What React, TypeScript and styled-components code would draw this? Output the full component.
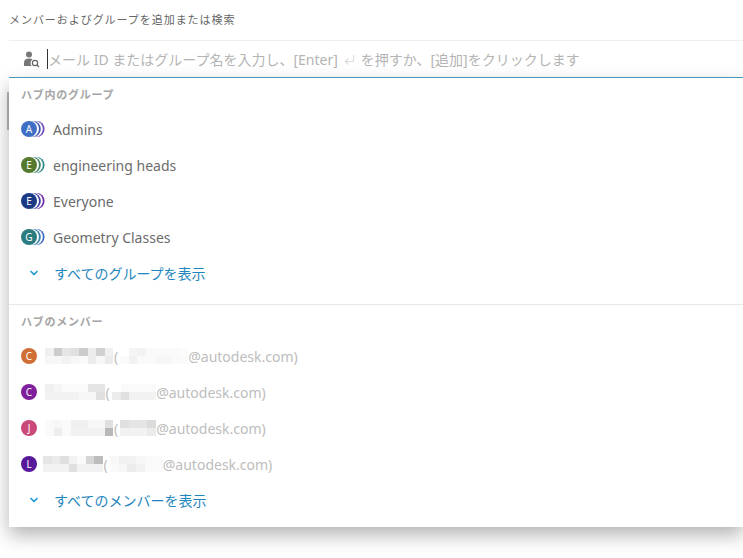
import React from 'react';
import styled, { createGlobalStyle } from 'styled-components';
import { ChevronDown } from 'lucide-react';

const GlobalStyle = createGlobalStyle`
  html, body {
    margin: 0;
    height: 100%;
    background: #fff;
    overflow: hidden;
  }
  body {
    font-family: "Noto Sans", "Noto Sans CJK JP", sans-serif;
  }
`;

const Page = styled.div`
  position: relative;
  width: 743px;
  height: 558px;
  padding: 12px 0 0 9px;
  box-sizing: border-box;
`;

// edge of a button on the page behind the open dropdown
const BehindEdge = styled.div`
  position: absolute;
  left: 7px;
  top: 92px;
  width: 2px;
  height: 38px;
  background: #b9b9b9;
`;

const FieldLabel = styled.div`
  height: 16px;
  line-height: 16px;
  font-size: 11px;
  letter-spacing: 0.95px;
  color: #666;
  margin-bottom: 12px;
`;

const SearchBar = styled.div`
  height: 38px;
  box-sizing: border-box;
  display: flex;
  align-items: center;
  padding-left: 14px;
  border-top: 1px solid #eeeeee;
  border-bottom: 1px solid #4f9fc6;
`;

const SearchIcon = styled.svg`
  width: 18px;
  height: 18px;
  flex: none;
  margin-right: 6px;
`;

const Caret = styled.span`
  width: 1px;
  height: 20px;
  background: #333;
  flex: none;
`;

const Placeholder = styled.span`
  font-size: 14px;
  color: #b4b4b4;
  white-space: nowrap;
`;

const EnterGlyph = styled.svg`
  width: 13px;
  height: 12px;
  margin: 0 5px 0 5px;
  vertical-align: -1px;
`;

const Dropdown = styled.div`
  position: relative;
  height: 449px;
  box-sizing: border-box;
  background: #fff;
  box-shadow: 0 8px 18px rgba(0, 0, 0, 0.3);
`;

const Section = styled.section<{ $last?: boolean }>`
  padding-top: 8px;
  padding-bottom: ${(p) => (p.$last ? '0' : '13px')};
  border-bottom: ${(p) => (p.$last ? 'none' : '1px solid #e8e8e8')};
`;

const SectionTitle = styled.h4`
  margin: 0 0 7px;
  padding-left: 12px;
  height: 18px;
  line-height: 18px;
  font-size: 11px;
  font-weight: 700;
  letter-spacing: 0.75px;
  color: #a5a5a5;
`;

const Row = styled.div`
  height: 36px;
  display: flex;
  align-items: center;
  padding-left: 12px;
`;

const GroupBadge = styled.svg`
  width: 24px;
  height: 16px;
  flex: none;
  margin-right: 8px;
`;

const GroupName = styled.span`
  font-size: 14px;
  color: #6c6c6c;
`;

const Avatar = styled.span<{ $bg: string; $gap: number }>`
  width: 16px;
  height: 16px;
  border-radius: 50%;
  background: ${(p) => p.$bg};
  color: #fff;
  font-size: 10px;
  line-height: 16px;
  text-align: center;
  flex: none;
  margin-right: ${(p) => p.$gap}px;
`;

const Mosaic = styled.span<{ $cols: number; $cell: number }>`
  display: inline-grid;
  grid-template-columns: repeat(${(p) => p.$cols}, ${(p) => p.$cell}px);
  grid-auto-rows: 8px;
  flex: none;
`;

const Paren = styled.span`
  font-size: 14px;
  color: #bdbdbd;
  white-space: nowrap;
`;

const OpenParen = styled(Paren)`
  margin: 0 2px 0 1px;
`;

const ShowAll = styled.a`
  display: flex;
  align-items: center;
  height: 36px;
  padding-left: 19px;
  font-size: 14px;
  color: #1f86bd;
  svg {
    width: 12px;
    height: 12px;
    color: #1f9ad6;
    stroke-width: 3.4;
    margin-right: 14px;
    flex: none;
  }
`;

const ArcBadge = ({ main, arc1, arc2, letter }: { main: string; arc1: string; arc2: string; letter: string }) => (
  <GroupBadge viewBox="0 0 24 16">
    <circle cx="15.6" cy="8" r="8" fill={arc2} />
    <circle cx="13.8" cy="8" r="8" fill="#fff" />
    <circle cx="11.8" cy="8" r="8" fill={arc1} />
    <circle cx="10" cy="8" r="8" fill="#fff" />
    <circle cx="8" cy="8" r="8" fill={main} />
    <text x="8" y="11.5" textAnchor="middle" fontSize="10" fill="#fff" fontFamily="Noto Sans, sans-serif">
      {letter}
    </text>
  </GroupBadge>
);

const groups = [
  { name: 'Admins', letter: 'A', main: '#3f6fc4', arc1: '#3d54b0', arc2: '#6b48b8' },
  { name: 'engineering heads', letter: 'E', main: '#557a2e', arc1: '#3f7f5f', arc2: '#2f8a88' },
  { name: 'Everyone', letter: 'E', main: '#1a3a86', arc1: '#3b3fa8', arc2: '#6a2aa8' },
  { name: 'Geometry Classes', letter: 'G', main: '#2b7c80', arc1: '#2f7fa8', arc2: '#3f6cc4' },
];

// name and id are blurred in the screenshot, so each one is a small grey mosaic
const members = [
  {
    letter: 'C',
    bg: '#cf6f35',
    gap: 8,
    idCell: 8.5,
    name: [[.06, .2, .1, .12, .2, .08, .18, .06], [.03, .03, .05, .03, .02, .08, .03, .08]],
    id: [[0, .04, .05, .02, .02, .02, .02, .01], [.02, .05, .02, .02, .03, .03, .02, .02]],
  },
  {
    letter: 'C',
    bg: '#7f1f9c',
    gap: 8,
    idCell: 8.9,
    name: [[.06, .04, .02, .02, .02, .1, .1], [.05, .05, .05, .05, .03, .03, .12]],
    id: [[0, .02, .02, .02, .02], [.08, .12, .05, .05, .05]],
  },
  {
    letter: 'J',
    bg: '#c94a78',
    gap: 8,
    idCell: 9,
    name: [[.02, .03, .02, .06, .06, .03, .03, .12], [.02, .07, .02, .05, .05, .05, .05, .28]],
    id: [[.12, .1, .1, .14], [.05, .05, .05, .08]],
  },
  {
    letter: 'L',
    bg: '#57189a',
    gap: 6,
    idCell: 8.85,
    name: [[.1, .08, .12, .05, .02, .16, .26], [.05, .05, .05, .12, .05, .05, .05]],
    id: [[.03, .06, .05, .03, .02, .02], [.02, .03, .08, .05, .02, .02]],
  },
];

const MosaicBlock = ({ cells, cell = 8.5 }: { cells: number[][]; cell?: number }) => (
  <Mosaic $cols={cells[0].length} $cell={cell}>
    {cells.flat().map((a, i) => (
      <span key={i} style={{ background: `rgba(0,0,0,${a})` }} />
    ))}
  </Mosaic>
);

export default function App() {
  return (
    <>
      <GlobalStyle />
      <Page>
        <BehindEdge />
        <FieldLabel>メンバーおよびグループを追加または検索</FieldLabel>
        <SearchBar>
          <SearchIcon viewBox="0 0 18 18">
            <circle cx="6" cy="4.5" r="3" fill="#777" />
            <path d="M1 16v-3.5C1 10 3 8.5 6 8.5c1.5 0 2.6.3 3.5 1A4.5 4.5 0 0 0 8.5 16z" fill="#777" />
            <circle cx="12" cy="13" r="2.6" fill="none" stroke="#666" strokeWidth="1.2" />
            <path d="M14 15l2 2" stroke="#666" strokeWidth="1.3" />
          </SearchIcon>
          <Caret />
          <Placeholder>
            メール ID またはグループ名を入力し、[Enter]
            <EnterGlyph viewBox="0 0 13 12">
              <path d="M10.5 1v6.5H3M5.5 4.5 2.2 7.5l3.3 3" fill="none" stroke="#dcdcdc" strokeWidth="1.1" />
            </EnterGlyph>
            を押すか、[追加]をクリックします
          </Placeholder>
        </SearchBar>
        <Dropdown>
          <Section>
            <SectionTitle>ハブ内のグループ</SectionTitle>
            {groups.map((g) => (
              <Row key={g.name}>
                <ArcBadge main={g.main} arc1={g.arc1} arc2={g.arc2} letter={g.letter} />
                <GroupName>{g.name}</GroupName>
              </Row>
            ))}
            <ShowAll>
              <ChevronDown />
              すべてのグループを表示
            </ShowAll>
          </Section>
          <Section $last>
            <SectionTitle>ハブのメンバー</SectionTitle>
            {members.map((m, i) => (
              <Row key={i}>
                <Avatar $bg={m.bg} $gap={m.gap}>
                  {m.letter}
                </Avatar>
                <MosaicBlock cells={m.name} />
                <OpenParen>(</OpenParen>
                <MosaicBlock cells={m.id} cell={m.idCell} />
                <Paren>@autodesk.com)</Paren>
              </Row>
            ))}
            <ShowAll>
              <ChevronDown />
              すべてのメンバーを表示
            </ShowAll>
          </Section>
        </Dropdown>
      </Page>
    </>
  );
}
